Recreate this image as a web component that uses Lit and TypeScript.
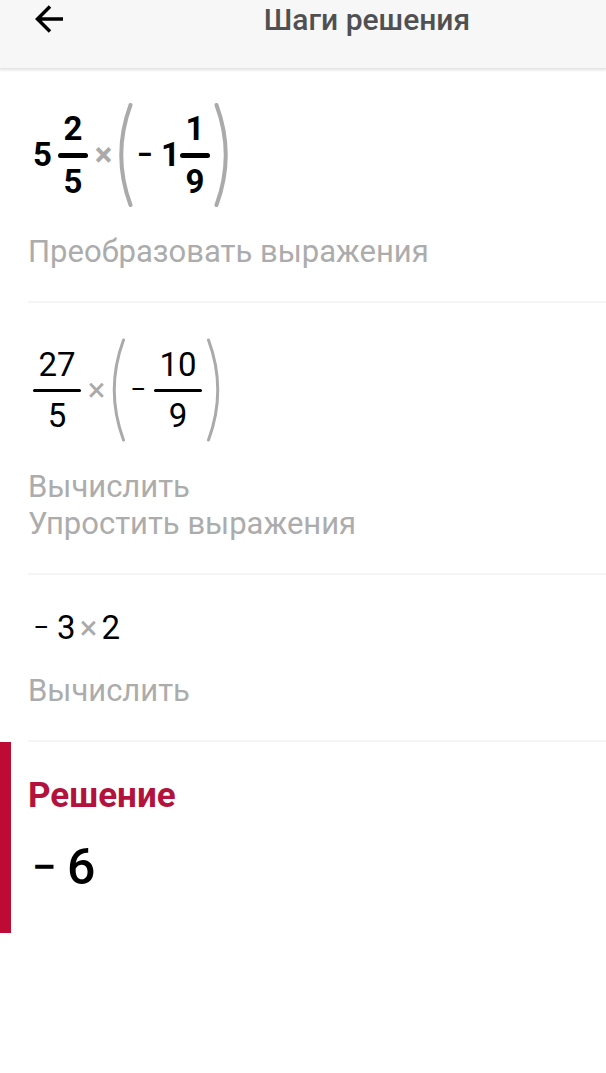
import { LitElement, html, css } from "lit";
import { customElement, property } from "lit/decorators.js";

@customElement("math-fraction")
class MathFraction extends LitElement {
  @property() top = "";
  @property() bottom = "";
  @property({ type: Boolean, reflect: true }) wide = false;
  @property({ type: Boolean, reflect: true }) heavy = false;

  static styles = css`
    :host { display: grid; width: 30px; text-align: center; line-height: 48px; }
    :host([wide]) { width: 48px; }
    .bar { height: 3px; border-radius: 2px; background: currentColor; }
    :host([heavy]) .bar { height: 5px; border-radius: 3px; }
  `;

  render() {
    return html`<span>${this.top}</span><span class="bar"></span><span>${this.bottom}</span>`;
  }
}

@customElement("math-parens")
class MathParens extends LitElement {
  @property({ type: Boolean, reflect: true }) heavy = false;

  static styles = css`
    :host { display: flex; align-items: center; gap: 4px; }
    .content { display: flex; align-items: center; }
    svg { display: block; fill: none; stroke: #aaa; stroke-width: 3; stroke-linecap: round; }
    :host([heavy]) svg { stroke-width: 4; }
  `;

  render() {
    return html`
      <svg width="14" height="106" viewBox="0 0 14 106" aria-hidden="true"><path d="M11.5 3Q-7 53 11.5 103" /></svg>
      <span class="content"><slot></slot></span>
      <svg width="14" height="106" viewBox="0 0 14 106" aria-hidden="true"><path d="M2.5 3Q21 53 2.5 103" /></svg>
    `;
  }
}

@customElement("app-root")
export class AppRoot extends LitElement {
  static styles = css`
    :host { display: block; min-height: 100vh; background: #fff; color: #000; font-family: Roboto, "Noto Sans", sans-serif; }
    * { box-sizing: border-box; }
    header { display: grid; grid-template-columns: 128px 1fr; height: 68px; background: #f7f7f7; box-shadow: 0 1px 3px 1px #e0e0e0; }
    .back { display: flex; justify-content: flex-end; width: 64px; height: 40px; padding: 4px 0 0; border: 0; background: none; color: #000; }
    h1 { margin: 0; text-align: center; font-size: 30px; line-height: 40px; font-weight: 500; color: #505052; }
    .step { display: grid; gap: 25px; margin-left: 28px; padding: 34px 0 31px; border-bottom: 2px solid #f5f5f5; }
    .math { display: flex; align-items: center; min-height: 38px; padding-left: 5px; font-size: 33px; line-height: 38px; }
    .bold { font-weight: 700; }
    .whole { margin-right: 6px; }
    .minus { width: 24px; font-size: 28px; }
    .times { width: 31px; text-align: center; color: #aaa; }
    .tight { width: 26px; }
    .note { margin: 0; font-size: 31px; line-height: 37px; color: #acacac; }
    .solution { display: grid; gap: 22px; padding: 34px 17px 36px; border-left: 11px solid #be0b35; }
    h2 { margin: 0; font-size: 35px; line-height: 40px; font-weight: 700; color: #b3123c; }
    .answer { display: flex; align-items: center; padding-left: 4px; font-size: 50px; line-height: 59px; font-weight: 500; }
    .answer-minus { width: 35px; font-size: 44px; }
  `;

  render() {
    return html`
      <header>
        <button class="back" aria-label="Назад">
          <svg width="30" height="30" viewBox="0 0 30 30" fill="none" stroke="currentColor" stroke-width="3.5"><path d="M29 15H4M16 2.5L3.5 15L16 27.5" /></svg>
        </button>
        <h1>Шаги решения</h1>
      </header>
      <main>
        <section class="step">
          <div class="math bold">
            <span class="whole">5</span>
            <math-fraction heavy top="2" bottom="5"></math-fraction>
            <span class="times">×</span>
            <math-parens heavy>
              <span class="minus">−</span>
              <span>1</span>
              <math-fraction heavy top="1" bottom="9"></math-fraction>
            </math-parens>
          </div>
          <p class="note">Преобразовать выражения</p>
        </section>
        <section class="step">
          <div class="math">
            <math-fraction wide top="27" bottom="5"></math-fraction>
            <span class="times">×</span>
            <math-parens>
              <span class="minus">−</span>
              <math-fraction wide top="10" bottom="9"></math-fraction>
            </math-parens>
          </div>
          <p class="note">Вычислить<br />Упростить выражения</p>
        </section>
        <section class="step">
          <div class="math">
            <span class="minus">−</span>
            <span>3</span>
            <span class="times tight">×</span>
            <span>2</span>
          </div>
          <p class="note">Вычислить</p>
        </section>
        <section class="solution">
          <h2>Решение</h2>
          <div class="answer"><span class="answer-minus">−</span><span>6</span></div>
        </section>
      </main>
    `;
  }
}
